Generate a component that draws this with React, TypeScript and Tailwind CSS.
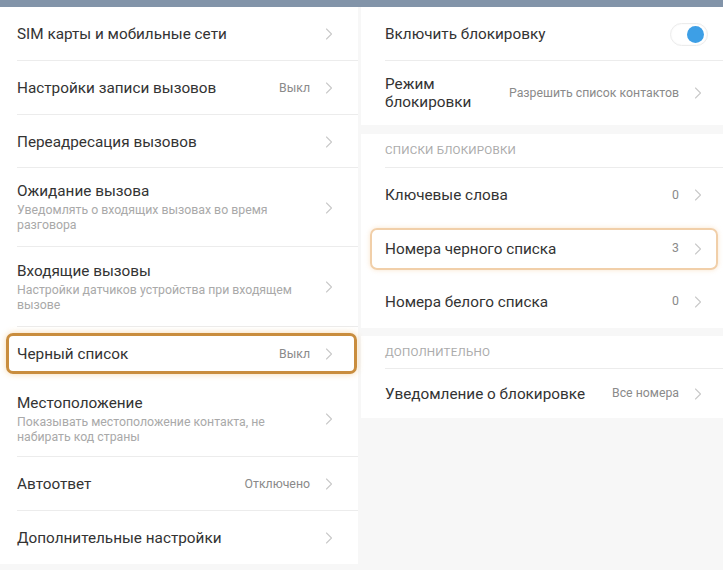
import { ChevronRight } from 'lucide-react';
import type { ReactNode } from 'react';

const Chevron = () => (
  <ChevronRight className="h-[20px] w-[20px] shrink-0 text-[#c9c9c9]" strokeWidth={1.3} />
);

type RowProps = {
  title: ReactNode;
  sub?: string;
  value?: string;
  h: string;
  divider?: boolean;
  side: 'left' | 'right';
  highlight?: 'strong' | 'soft';
  right?: ReactNode;
};

const Row = ({ title, sub, value, h, divider = true, side, highlight, right }: RowProps) => {
  const pad = side === 'left' ? 'pl-[17px] pr-[19px]' : 'pl-[24px] pr-[15px]';
  return (
    <div className={`relative ${h}`}>
      <div className={`flex h-full items-center ${pad}`}>
        <div className="min-w-0 flex-1">
          <div className="text-[15.3px] leading-[18px] text-[#333]">{title}</div>
          {sub && <div className="mt-[3px] pr-[4px] text-[12.3px] leading-[15px] text-[#a9a9a9]">{sub}</div>}
        </div>
        {right ?? (
          <div className="flex items-center gap-[9px]">
            {value && <span className="text-[12.3px] text-[#8a8a8a]">{value}</span>}
            <Chevron />
          </div>
        )}
      </div>
      {divider && (
        <div
          className={`absolute bottom-0 right-0 h-px bg-[#ececec] ${side === 'left' ? 'left-[17px]' : 'left-[24px]'}`}
        />
      )}
      {highlight === 'strong' && (
        <div className="absolute top-[6px] bottom-[7px] left-[6px] right-[1px] rounded-[7px] border-[3px] border-[#c98d3e] shadow-[0_0_6px_rgba(235,170,80,0.45)]" />
      )}
      {highlight === 'soft' && (
        <div className="absolute top-[6px] bottom-[5px] left-[9px] right-[5px] rounded-[7px] border-2 border-[#f1cfa9] shadow-[0_0_5px_rgba(240,190,130,0.4)]" />
      )}
    </div>
  );
};

const Header = ({ label, h }: { label: string; h: string }) => (
  <div className={`relative flex items-center pl-[24px] ${h}`}>
    <span className="text-[11.6px] uppercase tracking-[0.2px] text-[#ababab]">{label}</span>
    <div className="absolute bottom-0 left-[24px] right-0 h-px bg-[#ececec]" />
  </div>
);

const Toggle = () => (
  <div className="flex h-[23px] w-[38px] items-center justify-end rounded-full border border-[#ececec] bg-white pr-[3px] shadow-[inset_0_0_2px_rgba(0,0,0,0.05)]">
    <div className="h-[17px] w-[17px] rounded-full bg-[#3d9fe6]" />
  </div>
);

export default function App() {
  return (
    <div className="h-[570px] w-[723px] overflow-hidden bg-[#f7f7f7] font-['Roboto','Noto_Sans',sans-serif]">
      <div className="h-[7px] bg-[#8294a9]" />
      <div className="flex gap-[3px]">
        <div className="w-[358px] self-start bg-white">
          <Row side="left" h="h-[54px]" title="SIM карты и мобильные сети" />
          <Row side="left" h="h-[54px]" title="Настройки записи вызовов" value="Выкл" />
          <Row side="left" h="h-[53px]" title="Переадресация вызовов" />
          <Row
            side="left"
            h="h-[79px]"
            title="Ожидание вызова"
            sub="Уведомлять о входящих вызовах во время разговора"
          />
          <Row
            side="left"
            h="h-[80px]"
            title="Входящие вызовы"
            sub="Настройки датчиков устройства при входящем вызове"
          />
          <Row side="left" h="h-[54px]" title="Черный список" value="Выкл" highlight="strong" divider={false} />
          <Row
            side="left"
            h="h-[76px]"
            title="Местоположение"
            sub="Показывать местоположение контакта, не набирать код страны"
          />
          <Row side="left" h="h-[54px]" title="Автоответ" value="Отключено" />
          <Row side="left" h="h-[53px]" title="Дополнительные настройки" divider={false} />
        </div>

        <div className="flex-1">
          <div className="bg-white">
            <Row side="right" h="h-[54px]" title="Включить блокировку" right={<Toggle />} />
            <Row
              side="right"
              h="h-[64px]"
              title={
                <span className="leading-[17px]">
                  Режим
                  <br />
                  блокировки
                </span>
              }
              value="Разрешить список контактов"
              divider={false}
            />
          </div>
          <div className="h-[9px]" />
          <div className="bg-white">
            <Header label="Списки блокировки" h="h-[34px]" />
            <Row side="right" h="h-[54px]" title="Ключевые слова" value="0" divider={false} />
            <Row side="right" h="h-[53px]" title="Номера черного списка" value="3" highlight="soft" divider={false} />
            <Row side="right" h="h-[53px]" title="Номера белого списка" value="0" divider={false} />
          </div>
          <div className="h-[8px]" />
          <div className="bg-white">
            <Header label="Дополнительно" h="h-[33px]" />
            <Row side="right" h="h-[49px]" title="Уведомление о блокировке" value="Все номера" divider={false} />
          </div>
        </div>
      </div>
    </div>
  );
}
